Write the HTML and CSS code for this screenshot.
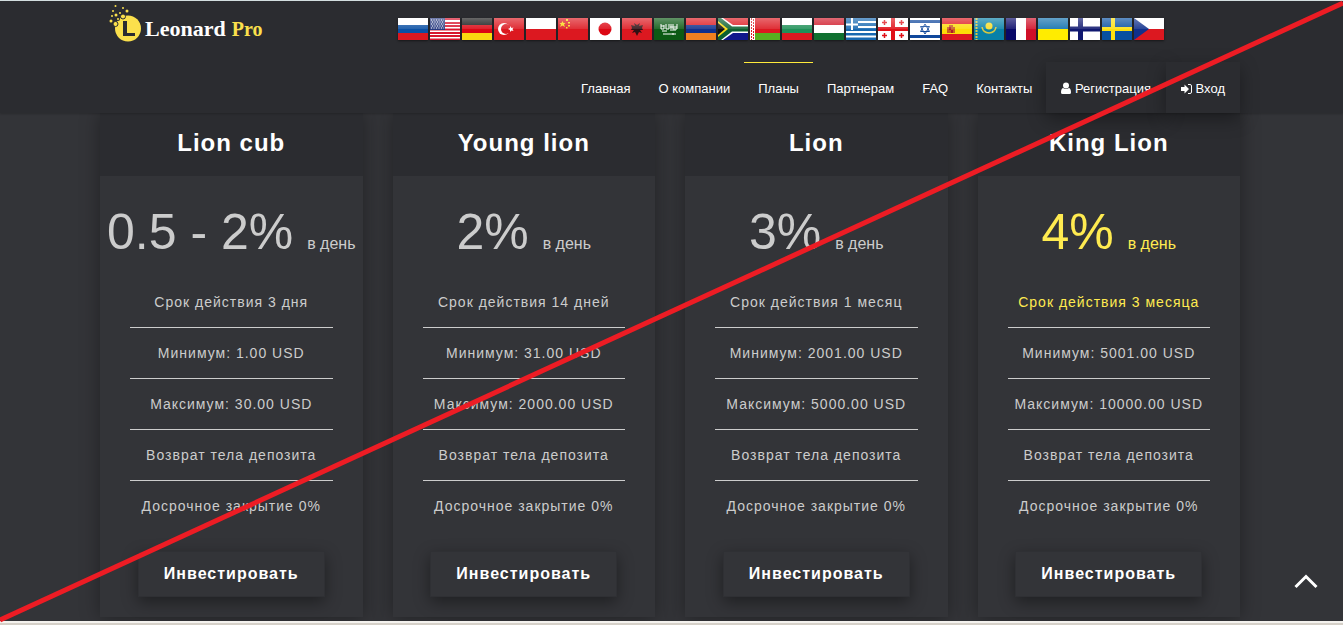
FILE: index.html
```html
<!DOCTYPE html>
<html lang="ru">
<head>
    <meta charset="UTF-8">
    <meta name="viewport" content="width=device-width, initial-scale=1.0">
    <title>Leonard Pro</title>
    <link rel="stylesheet" href="styles.css">
</head>
<body>

<header class="header">
    <div class="container">

        <!-- Logo and languages -->
        <div class="top-row">
            <a href="#" class="brand">
                <svg class="brand-icon" width="34" height="38" viewBox="0 0 34 38" aria-hidden="true">
                    <circle cx="19" cy="23.500" r="13" fill="#fbe04c"/>
                    <path d="M14 16h4v12h8v3H14z" fill="#2b2c30"/>
                    <circle cx="14" cy="11.500" r="2.500" fill="#fbe04c" stroke="#2b2c30"/>
                    <circle cx="6.500" cy="19" r="2.500" fill="#fbe04c" stroke="#2b2c30"/>
                    <circle cx="9" cy="14" r="2" fill="#2b2c30"/>
                    <g fill="#fbe04c">
                        <circle cx="6.500" cy="1" r="1"/>
                        <circle cx="14" cy="3" r="1"/>
                        <circle cx="18" cy="6" r="1.500"/>
                        <circle cx="4" cy="6" r="1"/>
                        <circle cx="3" cy="11" r="1"/>
                        <circle cx="7" cy="10" r="1.500"/>
                        <circle cx="11" cy="8" r="1"/>
                        <circle cx="2" cy="16" r="1.500"/>
                        <circle cx="9" cy="14" r="1"/>
                    </g>
                </svg>
                <span class="brand-name">Leonard</span>
                <span class="brand-pro">Pro</span>
            </a>

            <div class="flags">
                <a href="#" class="flag" aria-label="Русский"><svg viewBox="0 0 30 22"><path fill="#fff" d="M0 0h30v7H0z"/><path fill="#0b50a4" d="M0 7h30v8H0z"/><path fill="#dc1820" d="M0 15h30v7H0z"/></svg></a>
                <a href="#" class="flag" aria-label="English"><svg viewBox="0 0 30 22"><path fill="#fff" d="M0 0h30v22H0z"/><path stroke="#d8142c" stroke-width="2" d="M0 1h30M0 5h30M0 8h30M0 11.500h30M0 15h30M0 18h30M0 21.500h30"/><path fill="#283a80" d="M0 0h15v12H0z"/><path stroke="#fff" stroke-dasharray="1 1.500" d="M1 2h13M2 4h12M1 6h13M2 8h12M1 10h13"/></svg></a>
                <a href="#" class="flag" aria-label="Deutsch"><svg viewBox="0 0 30 22"><path fill="#161616" d="M0 0h30v7H0z"/><path fill="#dc0814" d="M0 7h30v8H0z"/><path fill="#fada10" d="M0 15h30v7H0z"/></svg></a>
                <a href="#" class="flag" aria-label="Türkçe"><svg viewBox="0 0 30 22"><path fill="#dc1820" d="M0 0h30v22H0z"/><circle cx="10" cy="11" r="6" fill="#fff"/><circle cx="12" cy="11" r="5" fill="#dc1820"/><path fill="#fff" d="M14 11l2-1 0-2 1.500 2 2-.5-1 1.500 1 2-2-.5-1.500 1.500v-2z"/></svg></a>
                <a href="#" class="flag" aria-label="Polski"><svg viewBox="0 0 30 22"><path fill="#fff" d="M0 0h30v11H0z"/><path fill="#dc1820" d="M0 11h30v11H0z"/></svg></a>
                <a href="#" class="flag" aria-label="中文"><svg viewBox="0 0 30 22"><path fill="#dc1820" d="M0 0h30v22H0z"/><path fill="#fada10" d="M4.500 3l1 2h2L6 6.500 7 9 4.500 7.500 2 9l1-2.500L1.500 5h2zM8 1h2v2H8zM10 4h2v1.500h-2zM10 7h2v1.500h-2zM8 9h1.500v1.500H8z"/></svg></a>
                <a href="#" class="flag" aria-label="日本語"><svg viewBox="0 0 30 22"><path fill="#fff" d="M0 0h30v22H0z"/><circle cx="15" cy="11" r="6.500" fill="#dc0814"/></svg></a>
                <a href="#" class="flag" aria-label="Shqip"><svg viewBox="0 0 30 22"><path fill="#dc1820" d="M0 0h30v22H0z"/><path fill="#301014" d="M12 5l3 2 3-2-1 3 4-1-1 3 1 2-3 0 2 3-3-1-2 4-2-4-3 1 2-3-3 0 1-2-1-3 4 1z"/></svg></a>
                <a href="#" class="flag" aria-label="العربية"><svg viewBox="0 0 30 22"><path fill="#0c5a14" d="M0 0h30v22H0z"/><path stroke="#fff" fill="none" d="M7 6v5h3V7m2-1v5h3V6m2 5V6m2 0v5h4V6M8 13h5m3-1h6M9 16h13m-3-1v2M7 8h3m6 1h7"/></svg></a>
                <a href="#" class="flag" aria-label="Հայերեն"><svg viewBox="0 0 30 22"><path fill="#dc1820" d="M0 0h30v7H0z"/><path fill="#10308c" d="M0 7h30v8H0z"/><path fill="#f08020" d="M0 15h30v7H0z"/></svg></a>
                <a href="#" class="flag" aria-label="Afrikaans"><svg viewBox="0 0 30 22"><path fill="#fff" d="M0 0h30v22H0z"/><path fill="#dc1820" d="M5 0h25v7H15z"/><path fill="#10188c" d="M5 22h25v-7H15z"/><path fill="#0c6030" d="M0 0h3l11 8.500h16v5H14L3 22H0z"/><path fill="#fada10" d="M0 3l10 8L0 19z"/><path fill="#111" d="M0 5l7 6-7 6z"/></svg></a>
                <a href="#" class="flag" aria-label="Беларуская"><svg viewBox="0 0 30 22"><path fill="#dc1820" d="M0 0h30v15H0z"/><path fill="#58b020" d="M0 15h30v7H0z"/><path fill="#fff" d="M0 0h5v22H0z"/><path stroke="#dc1820" stroke-dasharray="2 1" d="M1.500 0v22M3.500 1v21"/></svg></a>
                <a href="#" class="flag" aria-label="Български"><svg viewBox="0 0 30 22"><path fill="#fff" d="M0 0h30v7H0z"/><path fill="#209058" d="M0 7h30v8H0z"/><path fill="#dc1820" d="M0 15h30v7H0z"/></svg></a>
                <a href="#" class="flag" aria-label="Magyar"><svg viewBox="0 0 30 22"><path fill="#d01828" d="M0 0h30v7H0z"/><path fill="#fff" d="M0 7h30v8H0z"/><path fill="#107030" d="M0 15h30v7H0z"/></svg></a>
                <a href="#" class="flag" aria-label="Ελληνικά"><svg viewBox="0 0 30 22"><path fill="#1868b0" d="M0 0h30v22H0z"/><path stroke="#fff" stroke-width="2" d="M12 4h18M12 9h18M0 14h30M0 18.500h30M0 6.500h12M6 0v12"/></svg></a>
                <a href="#" class="flag" aria-label="ქართული"><svg viewBox="0 0 30 22"><path fill="#fff" d="M0 0h30v22H0z"/><path stroke="#e01018" stroke-width="4" d="M15 0v22M0 11h30"/><path stroke="#e01018" stroke-width="1.500" d="M6.500 2v5M4 4.500h5M23.500 2v5M21 4.500h5M6.500 15v5M4 17.500h5M23.500 15v5M21 17.500h5"/></svg></a>
                <a href="#" class="flag" aria-label="עברית"><svg viewBox="0 0 30 22"><path fill="#fff" d="M0 0h30v22H0z"/><path fill="#10489c" d="M0 2h30v3H0zM0 17h30v3H0z"/><path fill="none" stroke="#10489c" d="M15 6l4.500 7.500h-9zM15 16l4.500-7.500h-9z"/></svg></a>
                <a href="#" class="flag" aria-label="Español"><svg viewBox="0 0 30 22"><path fill="#dc1820" d="M0 0h30v22H0z"/><path fill="#fcdc08" d="M0 6h30v10H0z"/><path fill="#c86020" d="M5 9h8v6H5zM7 7h4v2H7z"/><path fill="#b01828" d="M7 9h2v3H7zM9 12h2v3H9z"/></svg></a>
                <a href="#" class="flag" aria-label="Қазақша"><svg viewBox="0 0 30 22"><path fill="#0880a8" d="M0 0h30v22H0z"/><path stroke="#d8c840" stroke-width="2" stroke-dasharray="2 1" d="M2.500 0v22"/><circle cx="15" cy="8" r="3.500" fill="#f8dc28"/><path fill="none" stroke="#d8c840" stroke-width="1.500" d="M8 9q1 6 7 6t7-6M10 13q5 4 10 0"/></svg></a>
                <a href="#" class="flag" aria-label="Français"><svg viewBox="0 0 30 22"><path fill="#080868" d="M0 0h10v22H0z"/><path fill="#fff" d="M10 0h10v22H10z"/><path fill="#d01028" d="M20 0h10v22H20z"/></svg></a>
                <a href="#" class="flag" aria-label="Українська"><svg viewBox="0 0 30 22"><path fill="#1070ac" d="M0 0h30v11H0z"/><path fill="#ffec00" d="M0 11h30v11H0z"/></svg></a>
                <a href="#" class="flag" aria-label="Suomi"><svg viewBox="0 0 30 22"><path fill="#fff" d="M0 0h30v22H0z"/><path stroke="#101870" stroke-width="5" d="M10.500 0v22M0 11h30"/></svg></a>
                <a href="#" class="flag" aria-label="Svenska"><svg viewBox="0 0 30 22"><path fill="#0850a0" d="M0 0h30v22H0z"/><path stroke="#fce010" stroke-width="4" d="M11 0v22M0 11h30"/></svg></a>
                <a href="#" class="flag" aria-label="Čeština"><svg viewBox="0 0 30 22"><path fill="#fff" d="M0 0h30v11H0z"/><path fill="#dc1820" d="M0 11h30v11H0z"/><path fill="#10308c" d="M0 0l15 11L0 22z"/></svg></a>
            </div>
        </div>

        <!-- Main menu -->
        <nav class="menu">
            <a href="#">Главная</a>
            <a href="#">О компании</a>
            <a href="#" class="active">Планы</a>
            <a href="#">Партнерам</a>
            <a href="#">FAQ</a>
            <a href="#">Контакты</a>
            <a href="#" class="account">
                <svg width="10" height="12" viewBox="0 0 10 12" fill="currentColor" aria-hidden="true"><circle cx="5" cy="3.500" r="3"/><path d="M2 6q3 2 6 0 2 .5 2 4.500 0 1.500-1.500 1.500h-7Q0 12 0 10.500q0-4 2-4.500z"/></svg>
                Регистрация
            </a>
            <a href="#" class="account">
                <svg width="11" height="10" viewBox="0 0 11 10" aria-hidden="true"><path fill="currentColor" d="M0 3h3.500V.5L8 5 3.500 9.500V7H0z"/><path fill="none" stroke="currentColor" d="M7 .5h2q1.500 0 1.500 1.500v6q0 1.500-1.500 1.500H7"/></svg>
                Вход
            </a>
        </nav>
    </div>
</header>

<!-- Investment plans -->
<main class="plans container">
    <section class="plan">
        <h2>Lion cub</h2>
        <p class="percent">0.5 - 2% <small>в день</small></p>
        <ul>
            <li>Срок действия 3 дня</li>
            <li>Минимум: 1.00 USD</li>
            <li>Максимум: 30.00 USD</li>
            <li>Возврат тела депозита</li>
            <li>Досрочное закрытие 0%</li>
        </ul>
        <button type="button">Инвестировать</button>
    </section>

    <section class="plan">
        <h2>Young lion</h2>
        <p class="percent">2% <small>в день</small></p>
        <ul>
            <li>Срок действия 14 дней</li>
            <li>Минимум: 31.00 USD</li>
            <li>Максимум: 2000.00 USD</li>
            <li>Возврат тела депозита</li>
            <li>Досрочное закрытие 0%</li>
        </ul>
        <button type="button">Инвестировать</button>
    </section>

    <section class="plan">
        <h2>Lion</h2>
        <p class="percent">3% <small>в день</small></p>
        <ul>
            <li>Срок действия 1 месяц</li>
            <li>Минимум: 2001.00 USD</li>
            <li>Максимум: 5000.00 USD</li>
            <li>Возврат тела депозита</li>
            <li>Досрочное закрытие 0%</li>
        </ul>
        <button type="button">Инвестировать</button>
    </section>

    <section class="plan">
        <h2>King Lion</h2>
        <p class="percent highlight">4% <small>в день</small></p>
        <ul>
            <li class="highlight">Срок действия 3 месяца</li>
            <li>Минимум: 5001.00 USD</li>
            <li>Максимум: 10000.00 USD</li>
            <li>Возврат тела депозита</li>
            <li>Досрочное закрытие 0%</li>
        </ul>
        <button type="button">Инвестировать</button>
    </section>
</main>

<footer class="footer"></footer>

<button type="button" class="to-top" aria-label="Наверх">
    <svg width="24" height="15" viewBox="0 0 24 15" aria-hidden="true"><path d="M1.500 13L12 2.500 22.500 13" fill="none" stroke="#fff" stroke-width="3"/></svg>
</button>

<!-- Diagonal strike over the whole page -->
<svg class="strike" viewBox="0 0 1343 625" preserveAspectRatio="none" aria-hidden="true">
    <path d="M0 620L1343 3" stroke="#ed1c24" stroke-width="5"/>
</svg>

</body>
</html>
```
FILE: styles.css
```css
* {
    box-sizing: border-box;
}

body {
    margin: 0;
    position: relative;
    background-color: #333438;
    color: #ccc;
    font-family: "Liberation Sans", Arial, sans-serif;
    font-size: 14px;
}

a {
    color: #fff;
    text-decoration: none;
}

.container {
    padding: 0 103px 0 100px;
}

/* Header */
.header {
    position: relative;
    z-index: 2;
    background-color: #2b2c30;
    border-top: 1px solid #d3dedf;
    box-shadow: 0 1px 2px rgba(0, 0, 0, 0.2);
}

.top-row {
    display: flex;
    align-items: flex-start;
    height: 61px;
}

.brand {
    display: flex;
    align-items: baseline;
    flex: 0 0 298px;
    padding: 4px 0 0 9px;
    font-family: "Liberation Serif", "Times New Roman", serif;
    font-weight: bold;
    line-height: 24px;
}

.brand-icon {
    align-self: flex-start;
    margin-right: 2px;
}

.brand-name {
    padding-top: 12px;
    font-size: 22px;
}

.brand-pro {
    margin-left: 6px;
    color: #fbe04c;
    font-size: 20px;
}

.flags {
    display: flex;
    gap: 2px;
    padding-top: 17px;
}

.flag {
    position: relative;
    width: 30px;
    height: 22px;
    box-shadow: 0 1px 2px rgba(0, 0, 0, 0.5);
}

.flag svg {
    display: block;
    width: 100%;
    height: 100%;
}

/* glossy upper half */
.flag::after {
    content: "";
    position: absolute;
    inset: 0 0 50% 0;
    background: linear-gradient(rgba(255, 255, 255, 0.35), rgba(255, 255, 255, 0.1));
}

.menu {
    display: flex;
    justify-content: flex-end;
    font-size: 13px;
    line-height: 20px;
}

.menu a {
    padding: 16px 14px 14px;
    border-top: 1px solid transparent;
    white-space: nowrap;
}

.menu .active {
    border-top-color: #ffeb3b;
}

.menu .account {
    padding-left: 15px;
    padding-right: 15px;
    background-color: #2b2c30;
    box-shadow: 0 6px 18px rgba(0, 0, 0, 0.35);
}

.menu svg {
    vertical-align: -1px;
}

/* Plans */
.plans {
    display: grid;
    grid-template-columns: repeat(4, 1fr);
    gap: 30px;
    padding-bottom: 4px;
}

.plan {
    padding-bottom: 20px;
    background-color: #333438;
    box-shadow: 0 0 18px rgba(0, 0, 0, 0.35);
    text-align: center;
}

.plan h2 {
    margin: 0;
    padding: 15px 0 18px;
    background-color: #2b2c30;
    color: #fff;
    font-size: 24px;
    line-height: 30px;
    letter-spacing: 1px;
}

.percent {
    margin: 0;
    padding: 26px 0 3px;
    font-size: 50px;
    line-height: 60px;
    white-space: nowrap;
}

.percent small {
    font-size: 16px;
}

.plan ul {
    list-style: none;
    margin: 0;
    padding: 0 30px;
    letter-spacing: 1px;
}

.plan li {
    padding: 15px 0;
    line-height: 20px;
    border-bottom: 1px solid #ccc;
    white-space: nowrap;
}

.plan li:last-child {
    border-bottom: none;
}

.plan .highlight {
    color: #ffeb50;
}

.plan button {
    margin-top: 20px;
    padding: 12px 25px;
    background-color: #333438;
    border: 1px solid #2f3034;
    box-shadow: 0 5px 16px rgba(0, 0, 0, 0.4);
    color: #fff;
    font-family: inherit;
    font-size: 16px;
    font-weight: bold;
    line-height: 20px;
    letter-spacing: 1px;
    cursor: pointer;
}

.footer {
    position: relative;
    height: 4px;
    background-color: #d5d0c8;
    border-top: 2px solid #f4f2ee;
}

.to-top {
    position: fixed;
    right: 25px;
    bottom: 36px;
    padding: 0;
    background: none;
    border: none;
    cursor: pointer;
}

.to-top svg {
    display: block;
}

.strike {
    position: absolute;
    top: 0;
    left: 0;
    z-index: 3;
    width: 100%;
    height: 100%;
    pointer-events: none;
}
```
